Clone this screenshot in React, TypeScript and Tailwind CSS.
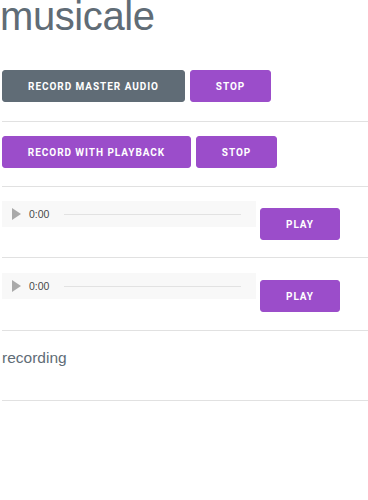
function Btn({ label, w, dark }: { label: string; w: string; dark?: boolean }) {
  return (
    <button
      className={`${w} h-[32px] rounded-[3px] border text-white font-['Roboto',sans-serif] text-[10px] font-bold tracking-[0.95px] uppercase flex items-center justify-center ${
        dark ? 'bg-[#606c76] border-[#606c76]' : 'bg-[#9b4dca] border-[#9b4dca]'
      }`}
    >
      {label}
    </button>
  );
}

function AudioBar() {
  return (
    <div className="w-[254px] h-[26px] bg-[#f8f8f8] flex items-center">
      <svg width="9" height="12" viewBox="0 0 9 12" className="ml-[10px]">
        <path d="M0 0 L9 6 L0 12 Z" fill="#a9a9a9" />
      </svg>
      <span className="ml-[8px] text-[10.5px] text-[#4a4a4a] leading-none">0:00</span>
      <div className="ml-[15px] w-[177px] h-[1px] bg-[#e2e2e2]" />
    </div>
  );
}

export default function App() {
  return (
    <div className="w-[368px] h-[500px] overflow-hidden bg-white text-[#606c76] font-['Liberation_Sans',Arial,sans-serif]">
      <h1 className="-mt-[8px] text-[40px] font-normal leading-[48px] tracking-[-0.4px]">musicale</h1>
      <div className="pl-[2px]">
        <div className="flex gap-[5px] pt-[30px] pb-[19px]">
          <Btn label="Record master audio" w="w-[183px]" dark />
          <Btn label="Stop" w="w-[81px]" />
        </div>
        <div className="border-t border-[#e1e1e1] flex gap-[5px] pt-[14px] pb-[18px]">
          <Btn label="Record with playback" w="w-[189px]" />
          <Btn label="Stop" w="w-[81px]" />
        </div>
        <div className="border-t border-[#e1e1e1] flex items-start gap-[4px] pt-[14px] pb-[17px]">
          <AudioBar />
          <div className="mt-[7px]">
            <Btn label="Play" w="w-[80px]" />
          </div>
        </div>
        <div className="border-t border-[#e1e1e1] flex items-start gap-[4px] pt-[15px] pb-[18px]">
          <AudioBar />
          <div className="mt-[7px]">
            <Btn label="Play" w="w-[80px]" />
          </div>
        </div>
        <div className="border-t border-[#e1e1e1] pt-[15px] pb-[30px]">
          <p className="text-[15.5px] leading-[24px]">recording</p>
        </div>
        <div className="border-t border-[#e1e1e1]" />
      </div>
    </div>
  );
}
